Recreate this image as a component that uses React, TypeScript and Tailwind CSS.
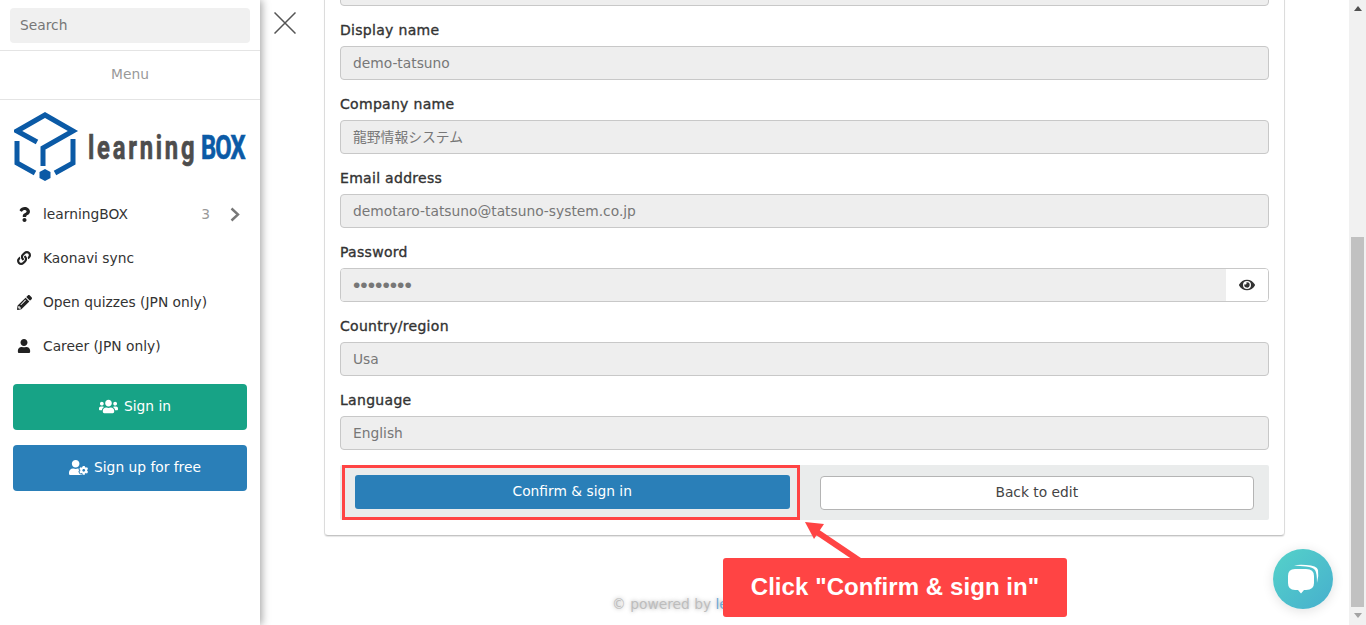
import {
  FaEye,
  FaLink,
  FaPencilAlt,
  FaQuestion,
  FaUser,
  FaUserCog,
  FaUsers,
} from 'react-icons/fa';

const fields = [
  { label: 'Display name', value: 'demo-tatsuno' },
  { label: 'Company name', value: '龍野情報システム' },
  { label: 'Email address', value: 'demotaro-tatsuno@tatsuno-system.co.jp' },
];

const fieldsAfter = [
  { label: 'Country/region', value: 'Usa' },
  { label: 'Language', value: 'English' },
];

const menu = [
  { icon: <FaQuestion className="text-[15px]" />, label: 'learningBOX', count: '3' },
  { icon: <FaLink className="text-[14px]" />, label: 'Kaonavi sync' },
  { icon: <FaPencilAlt className="text-[15px]" />, label: 'Open quizzes (JPN only)' },
  { icon: <FaUser className="text-[14px]" />, label: 'Career (JPN only)' },
];

const Logo = () => (
  <svg width="236" height="74" viewBox="0 0 236 74" className="block">
    <g fill="none" stroke="#0b5aa6" strokeWidth="5">
      <path d="M23 32 L3 21 L31 5 L59 21 L29 38 V56" />
      <path d="M3 31 V53 L21 63" />
      <path d="M59 29 V53 L41 63" />
    </g>
    <path d="M31 59 L36.5 62 V68 L31 71 L25.5 68 V62 Z" fill="#0b5aa6" />
    <g fontFamily="Roboto, sans-serif" fontWeight="700" fontSize="33" strokeWidth="0.7">
      <text
        transform="translate(74 49) scale(0.72 1)"
        textLength="148"
        lengthAdjust="spacing"
        fill="#4d4d4d"
        stroke="#4d4d4d"
      >
        learning
      </text>
      <text
        transform="translate(187 49) scale(0.72 1)"
        textLength="62"
        lengthAdjust="spacing"
        fill="#0b5aa6"
        stroke="#0b5aa6"
      >
        BOX
      </text>
    </g>
  </svg>
);

const FieldLabel = ({ children }: { children: string }) => (
  <div className="h-[40px] pt-[14px] text-[14px] leading-[20px] tracking-[0.3px] text-[#333] [-webkit-text-stroke:0.35px_#333]">
    {children}
  </div>
);

const Field = ({ label, value }: { label: string; value: string }) => (
  <div>
    <FieldLabel>{label}</FieldLabel>
    <div className="flex h-[34px] items-center rounded-[4px] border border-[#c8c8c8] bg-[#eeeeee] px-[12px] text-[#777]">
      {value}
    </div>
  </div>
);

const App = () => {
  return (
    <div className="relative flex h-[625px] w-[1366px] overflow-hidden bg-white font-['DejaVu_Sans','Noto_Sans_CJK_JP',sans-serif] text-[13.8px] text-[#333]">
      {/* Sidebar */}
      <aside className="z-10 flex w-[260px] shrink-0 flex-col bg-white shadow-[2px_0_8px_rgba(0,0,0,0.35)]">
        <div className="h-[51px] border-b border-[#e4e4e4] px-[10px] pt-[8px]">
          <div className="flex h-[35px] items-center rounded-[4px] bg-[#f0f0f0] px-[10px] text-[#777]">Search</div>
        </div>
        <div className="flex h-[49px] items-center justify-center border-b border-[#e4e4e4] pb-[2px] text-[#999]">
          Menu
        </div>
        <div className="h-[92px] pl-[14px] pt-[10px]">
          <Logo />
        </div>
        <ul>
          {menu.map((item) => (
            <li key={item.label} className="flex h-[44px] items-center pl-[17px] pr-[20px]">
              <span className="flex w-[26px] text-[#222]">{item.icon}</span>
              <span className="flex-1">{item.label}</span>
              {item.count && (
                <>
                  <span className="mr-[20px] text-[#999]">{item.count}</span>
                  <svg width="10" height="15" viewBox="0 0 10 15" fill="none" stroke="#777" strokeWidth="2.4">
                    <path d="M1.5 1.5 L8 7.5 L1.5 13.5" />
                  </svg>
                </>
              )}
            </li>
          ))}
        </ul>
        <div className="mt-[16px] flex flex-col gap-[15px] px-[13px]">
          <div className="flex h-[46px] items-center justify-center gap-[6px] rounded-[4px] bg-[#17a386] pb-[2px] pl-[10px] text-white">
            <FaUsers className="text-[19px]" />
            Sign in
          </div>
          <div className="flex h-[46px] items-center justify-center gap-[6px] rounded-[4px] bg-[#2a7fb8] pb-[2px] pl-[10px] text-white">
            <FaUserCog className="text-[19px]" />
            Sign up for free
          </div>
        </div>
      </aside>

      {/* Close */}
      <div className="w-[64px] shrink-0 pl-[14px] pt-[12px]">
        <svg width="22" height="22" viewBox="0 0 22 22" className="block" stroke="#555" strokeWidth="1.5">
          <path d="M0.5 0.5 L21.5 21.5 M21.5 0.5 L0.5 21.5" />
        </svg>
      </div>

      {/* Form */}
      <main className="w-[961px] shrink-0">
        <div className="-mt-[29px] rounded-[4px] border border-[#dcdcdc] border-b-[#c4c4c4] px-[15px] pb-[15px] shadow-[0_1px_1px_rgba(0,0,0,0.1)]">
          <div className="h-[34px] rounded-[4px] border border-[#c8c8c8] bg-[#eeeeee]" />
          {fields.map((f) => (
            <Field key={f.label} label={f.label} value={f.value} />
          ))}
          <div>
            <FieldLabel>Password</FieldLabel>
            <div className="flex h-[34px] overflow-hidden rounded-[4px] border border-[#c8c8c8]">
              <div className="flex flex-1 items-center bg-[#eeeeee] px-[12px] font-['Liberation_Sans',sans-serif] text-[21px] text-[#777]">
                ••••••••
              </div>
              <div className="flex w-[42px] items-center justify-center bg-white">
                <FaEye className="text-[16px] text-[#333]" />
              </div>
            </div>
          </div>
          {fieldsAfter.map((f) => (
            <Field key={f.label} label={f.label} value={f.value} />
          ))}
          <div className="mt-[15px] grid h-[55px] grid-cols-2 gap-[30px] rounded-[2px] bg-[#eaecec] px-[15px] pt-[10px]">
            <div className="flex h-[34px] items-center justify-center rounded-[3px] bg-[#2a7fb8] pb-[2px] text-white">
              Confirm &amp; sign in
            </div>
            <div className="mt-[1px] flex h-[34px] items-center justify-center rounded-[4px] border border-[#b4b4b4] bg-white pb-[2px] text-[#444]">
              Back to edit
            </div>
          </div>
        </div>
        <div className="mt-[58px] pl-[288px] leading-[20px] text-[#bdbdbd] [text-shadow:0_0_4px_rgba(0,0,0,0.35)]">
          © powered by <span className="text-[#6ea9d6]">learningBOX</span>
        </div>
      </main>

      <div className="flex-1" />

      {/* Scrollbar */}
      <div className="flex w-[17px] shrink-0 flex-col items-center bg-[#f1f1f1]">
        <div className="mt-[6px] h-0 w-0 border-x-[4px] border-b-[5px] border-x-transparent border-b-[#505050]" />
        <div className="mt-[226px] h-[370px] w-[13px] bg-[#c1c1c1]" />
        <div className="mt-[6px] h-0 w-0 border-x-[4px] border-t-[5px] border-x-transparent border-t-[#a3a3a3]" />
      </div>

      {/* Annotations */}
      <div className="absolute left-[342px] top-[465px] z-20 h-[55px] w-[458px] border-[3px] border-[#ff4444]" />
      <svg className="absolute left-[800px] top-[515px] z-20" width="70" height="50" viewBox="0 0 70 50">
        <path d="M14 15 L60 46" stroke="#ff4444" strokeWidth="6" fill="none" />
        <path d="M5 7 L24 9 L14 24 Z" fill="#ff4444" />
      </svg>
      <div className="absolute left-[723px] top-[558px] z-20 flex h-[59px] w-[344px] items-center justify-center rounded-[3px] bg-[#ff4444] pb-[2px] font-['Liberation_Sans',sans-serif] text-[24px] font-bold tracking-[0.07px] text-white">
        Click "Confirm &amp; sign in"
      </div>

      {/* Chat button */}
      <div className="absolute left-[1273px] top-[549px] z-20 flex h-[60px] w-[60px] items-center justify-center rounded-full bg-gradient-to-br from-[#55d2c9] to-[#47afcd] shadow-[0_2px_12px_rgba(0,0,0,0.12)]">
        <svg width="34" height="32" viewBox="0 0 34 32">
          <path d="M8 2.5 Q12 1.5 20 2 Q31 2.5 32 7 Q33 13 31 20 Q31 10 29 7 Q27 4 20 3.5 Q14 3 8 2.5 Z" fill="white" />
          <path
            d="M9 6 H20 Q28 6 28 13 V20 Q28 27 20 27 H18 L15 30.5 L12 27 H9 Q2 27 2 20 V13 Q2 6 9 6 Z"
            fill="white"
          />
        </svg>
      </div>
    </div>
  );
};
export default App;
